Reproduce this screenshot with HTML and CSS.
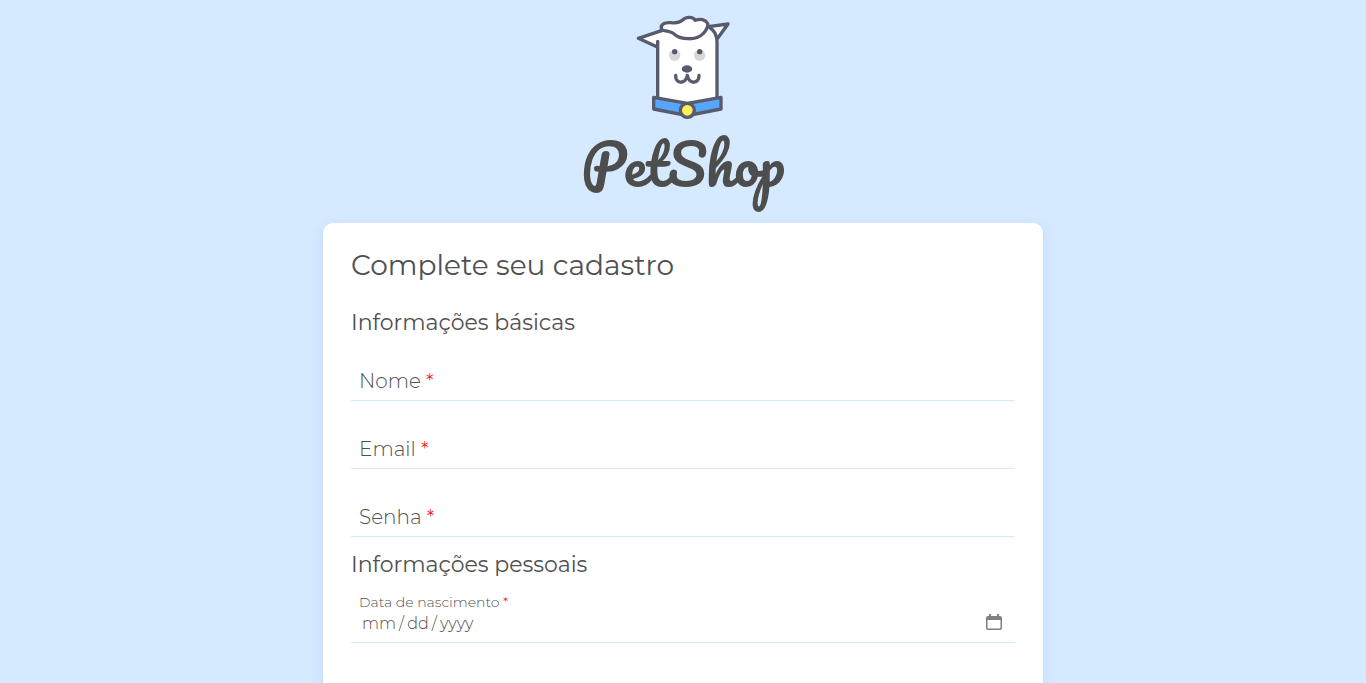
FILE: index.html
```html
<!DOCTYPE html>
<html lang="pt-BR">
<head>
  <meta charset="utf-8">
  <meta name="viewport" content="width=device-width, initial-scale=1">
  <title>PetShop</title>
  <link rel="stylesheet" href="styles.css">
</head>
<body>
  <header class="brand">
    <svg class="brand-dog" viewBox="42 27 276 315" aria-hidden="true">
      <path class="fur" d="M104 92 L118 73 H258 C274 78 282 92 282 106 V278 L193 292 L104 274 Z"/>
      <g class="ink">
        <path class="white" d="M103 123 L46 97 L118 73"/>
        <path class="white" d="M262 61 L315 54 L284 97"/>
        <path d="M104 106 V274"/>
        <path d="M258 63 Q282 77 282 108 V274"/>
        <path class="white" d="M116 71 C110 55 126 48 144 50 C159 52 170 50 178 43 C188 31 210 31 217 43 C231 37 247 40 253 51 C259 61 250 66 249 72 C245 80 242 80 239 84 C222 103 171 103 152 83 C146 76 127 76 116 71 Z"/>
      </g>
      <circle class="eye" cx="155" cy="148" r="17"/>
      <circle class="eye" cx="230" cy="148" r="17"/>
      <circle class="dark" cx="155" cy="137" r="8"/>
      <circle class="dark" cx="230" cy="137" r="8"/>
      <ellipse class="dark" cx="192" cy="189" rx="16" ry="11"/>
      <g class="ink">
        <path d="M158 208 C156 235 189 236 193 208 C197 236 229 235 228 208"/>
        <path class="collar" d="M92 274 L193 292 L294 274 V309 L193 329 L92 309 Z"/>
        <circle class="tag" cx="193" cy="313" r="21"/>
      </g>
    </svg>
    <h1 class="brand-name">PetShop</h1>
  </header>

  <main class="card">
    <form class="form">
      <h2 class="title">Complete seu cadastro</h2>

      <section class="group">
        <h3 class="subtitle">Informações básicas</h3>
        <div class="fields">
          <div class="field">
            <label class="field-label" for="nome">Nome <span class="required">*</span></label>
            <input class="field-input" id="nome" type="text" required>
          </div>
          <div class="field">
            <label class="field-label" for="email">Email <span class="required">*</span></label>
            <input class="field-input" id="email" type="email" required>
          </div>
          <div class="field">
            <label class="field-label" for="senha">Senha <span class="required">*</span></label>
            <input class="field-input" id="senha" type="password" required>
          </div>
        </div>
      </section>

      <section class="group">
        <h3 class="subtitle">Informações pessoais</h3>
        <div class="date-field">
          <label class="date-label" for="nascimento">Data de nascimento <span class="required">*</span></label>
          <input class="date-input" id="nascimento" type="date" lang="en-US" required>
        </div>
      </section>
    </form>
  </main>
</body>
</html>
```
FILE: styles.css
```css
* {
  box-sizing: border-box;
}

body {
  display: flex;
  flex-direction: column;
  align-items: center;
  min-height: 100vh;
  margin: 0;
  background: #d5e9ff;
  color: #505050;
  font-family: Montserrat, Inter, "Open Sans", sans-serif;
}

h1,
h2,
h3 {
  margin: 0;
  font-weight: 400;
}

.brand {
  display: flex;
  flex-direction: column;
  align-items: center;
  padding-top: 15px;
}

.brand-dog {
  width: 92px;
  height: 105px;
  overflow: visible;
}

.fur,
.white {
  fill: #fff;
}

.ink {
  fill: none;
  stroke: #575b6d;
  stroke-width: 10;
  stroke-linecap: round;
  stroke-linejoin: round;
}

.ink .white {
  fill: #fff;
}

.eye {
  fill: #d8d8d8;
}

.dark {
  fill: #575b6d;
}

.ink .collar {
  fill: #56a5ff;
}

.ink .tag {
  fill: #fff05a;
}

.brand-name {
  padding-bottom: 16px;
  color: #4d4d4d;
  font-family: Pacifico, Lato, cursive;
  font-size: 56px;
  line-height: 87px;
}

.card {
  flex: 1;
  width: 100%;
  max-width: 720px;
  padding: 24px 28px;
  border-radius: 10px 10px 0 0;
  background: #fff;
  box-shadow: 0 4px 12px #bcdcff;
}

.form {
  display: flex;
  flex-direction: column;
  gap: 12px;
}

.title {
  margin-bottom: 12px;
  font-size: 28px;
  line-height: 36px;
}

.subtitle {
  font-size: 22px;
  line-height: 32px;
}

.fields {
  display: grid;
  gap: 28px;
  margin-top: 22px;
}

.field {
  display: grid;
  border-bottom: 1px solid #d5e9ff;
}

.field-label,
.field-input {
  grid-area: 1 / 1;
}

.field-label {
  z-index: 1;
  padding: 1px 8px 0;
  font-size: 20px;
  font-weight: 300;
  line-height: 38px;
  pointer-events: none;
}

.required {
  color: #f00;
}

.field-input,
.date-input {
  width: 100%;
  border: 0;
  outline: 0;
  background: transparent;
  color: inherit;
  font-family: inherit;
  font-size: 16px;
  font-weight: 300;
}

.field-input {
  padding: 0 8px;
}

.date-field {
  display: grid;
  margin-top: 13px;
  border-bottom: 1px solid #d5e9ff;
}

.date-label {
  padding: 0 8px;
  font-size: 14px;
  font-weight: 300;
  line-height: 16px;
}

.date-input {
  height: 32px;
  padding: 0 13px 6px 10px;
}

.date-input::-webkit-datetime-edit-text {
  padding: 0 2px;
}

.date-input::-webkit-calendar-picker-indicator {
  width: 16px;
  height: 16px;
  margin-bottom: 2px;
  padding: 0;
  background: url("data:image/svg+xml,%3Csvg xmlns='http://www.w3.org/2000/svg' viewBox='0 0 16 16'%3E%3Cpath fill='%23808080' fill-rule='evenodd' d='M3 0h2v2h6V0h2v2h1a2 2 0 0 1 2 2v10a2 2 0 0 1-2 2H2a2 2 0 0 1-2-2V4a2 2 0 0 1 2-2h1zM1.5 6v7.7a.8.8 0 0 0 .8.8h11.4a.8.8 0 0 0 .8-.8V6z'/%3E%3C/svg%3E") center / 16px no-repeat;
}
```
